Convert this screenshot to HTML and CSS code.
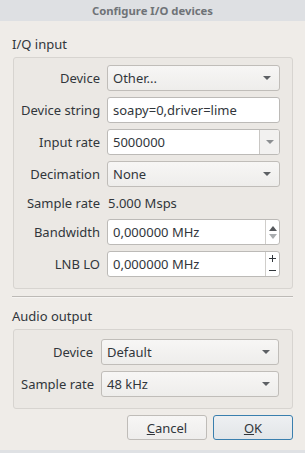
FILE: index.html
```html
<!DOCTYPE html>
<html>
	<head>
		<title>Configure I/O devices</title>
		<meta charset="utf-8">
		<link rel="stylesheet" href="styles.css">
	</head>
	<body>
		<div class="dialog">
			<div class="titlebar">Configure I/O devices</div>
			<div class="content">
				<div class="groupTitle">I/Q input</div>
				<div class="group iq">
					<label>Device</label>
					<div class="combo"><span>Other...</span><i class="arrow"></i></div>

					<label>Device string</label>
					<div class="edit">soapy=0,driver=lime</div>

					<label>Input rate</label>
					<div class="edit editCombo"><span>5000000</span><b class="btn"><i class="arrow light"></i></b></div>

					<label>Decimation</label>
					<div class="combo"><span>None</span><i class="arrow"></i></div>

					<label class="short">Sample rate</label>
					<div class="value short">5.000 Msps</div>

					<label>Bandwidth</label>
					<div class="edit spin"><span>0,000000 MHz</span>
						<b class="spinBtns"><i class="up"></i><i class="down"></i></b>
					</div>

					<label>LNB LO</label>
					<div class="edit spin"><span>0,000000 MHz</span>
						<b class="spinBtns signs"><i class="plus"></i><i class="minus"></i></b>
					</div>
				</div>

				<div class="separator"></div>

				<div class="groupTitle">Audio output</div>
				<div class="group audio">
					<label>Device</label>
					<div class="combo"><span>Default</span><i class="arrow"></i></div>

					<label>Sample rate</label>
					<div class="combo"><span>48 kHz</span><i class="arrow"></i></div>
				</div>

				<div class="buttons">
					<button class="button"><u>C</u>ancel</button>
					<button class="button default"><u>O</u>K</button>
				</div>
			</div>
		</div>
	</body>
</html>
```
FILE: styles.css
```css
* {box-sizing: border-box;}
body {
	margin: 0;
	width: 305px;
	height: 453px;
	overflow: hidden;
	background: #dfe1e4;
	font-family: 'Noto Sans', sans-serif;
	font-size: 13px;
	color: #31363b;
}
.dialog {height: 450px; background: #efece8; display: flex; flex-direction: column;}
.titlebar {
	height: 21px;
	background: #dee0e3;
	color: #6f7377;
	font-weight: bold;
	font-size: 11.3px;
	line-height: 22px;
	text-align: center;
}
.content {padding: 14px 12px 0 12px; flex: 1; display: flex; flex-direction: column;}
.groupTitle {height: 22px; line-height: 18px; padding-left: 0; font-size: 13px;}
.group {
	margin-left: 1px;
	border: 1px solid #d7d4d0;
	border-radius: 3px;
	background: #ebe8e4;
	display: grid;
	align-items: center;
	row-gap: 6px;
}
.iq {grid-template-columns: 79px 1fr; column-gap: 7px; padding: 7px 12px 11px 7px;}
.audio {grid-template-columns: 72px 1fr; column-gap: 8px; padding: 9px 13px 11px 7px;}
label {text-align: right; white-space: nowrap;}
.short {height: 20px; line-height: 20px;}

.combo, .edit {
	height: 26px;
	border: 1px solid #c0bdb9;
	border-radius: 3px;
	display: flex;
	align-items: center;
	padding-left: 5px;
	white-space: nowrap;
}
.combo {background: linear-gradient(#f7f6f5, #eeedeb); justify-content: space-between; padding-right: 8px;}
.edit {background: #fff; border-color: #bcbab7;}
.arrow {
	width: 0; height: 0;
	border-left: 4px solid transparent;
	border-right: 4px solid transparent;
	border-top: 4px solid #5d6064;
}
.arrow.light {border-top-color: #8c8f92;}
.editCombo, .spin {padding-right: 0; justify-content: space-between;}
.btn {
	width: 20px; height: 24px;
	border-left: 1px solid #c9c7c4;
	background: #f2f1f0;
	display: flex; align-items: center; justify-content: center;
	border-radius: 0 2px 2px 0;
}
.value {padding-left: 1px;}
.spinBtns {
	width: 14px; height: 24px;
	border-left: 1px solid #d0cecb;
	display: flex; flex-direction: column; align-items: center; justify-content: center;
	gap: 3px;
}
.up, .down {width: 0; height: 0; border-left: 4px solid transparent; border-right: 4px solid transparent;}
.up {border-bottom: 5px solid #55585c;}
.down {border-top: 5px solid #a9acaf;}
.signs {gap: 5px;}
.plus, .minus {position: relative; width: 7px; height: 7px;}
.plus::before, .minus::before {content: ''; position: absolute; left: 0; right: 0; top: 3px; height: 1px; background: #31363b;}
.plus::after {content: ''; position: absolute; top: 0; bottom: 0; left: 3px; width: 1px; background: #31363b;}

.separator {height: 2px; background: #bdbab6; margin: 7px 0 9px 0; border-bottom: 1px solid #f6f4f2;}

.buttons {display: flex; justify-content: flex-end; gap: 6px; margin-top: 6px;}
.button {
	width: 80px; height: 25px;
	font-family: 'Noto Sans', sans-serif;
	font-size: 13px;
	color: #31363b;
	border: 1px solid #bfbcb8;
	border-radius: 3px;
	background: linear-gradient(#f7f6f5, #eeedec);
	padding: 0;
}
.default {border-color: #3a7fae; background: linear-gradient(#eef0f2, #e2e5e8);}
```
